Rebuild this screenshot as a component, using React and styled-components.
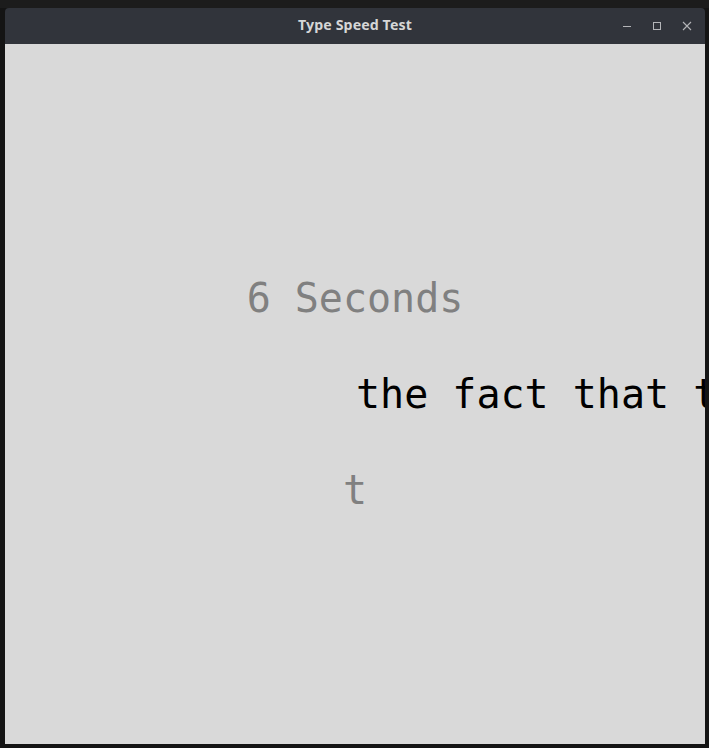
import React from "react";
import styled, { createGlobalStyle } from "styled-components";

const Global = createGlobalStyle`
  html, body { margin: 0; padding: 0; background: #141414; overflow: hidden; }
  #root { width: 709px; height: 748px; }
`;

const Desktop = styled.div`
  width: 709px;
  height: 748px;
  box-sizing: border-box;
  padding: 8px 4px 0 5px;
  background: linear-gradient(#1c1c1c 0 8px, #141414 8px);
`;

const Window = styled.div`
  width: 700px;
  display: flex;
  flex-direction: column;
`;

const TitleBar = styled.div`
  height: 36px;
  background: #31343b;
  border-radius: 4px 4px 0 0;
  display: grid;
  grid-template-columns: 1fr auto 1fr;
  align-items: center;
  padding: 0 10px;
  box-sizing: border-box;
`;

const Title = styled.div`
  grid-column: 2;
  font-family: "Noto Sans", "Open Sans", sans-serif;
  font-weight: 700;
  font-size: 14.2px;
  line-height: 20px;
  color: #d6d6d6;
  letter-spacing: 0.1px;
  padding-left: 0;
  margin-top: -2px;
`;

const Controls = styled.div`
  grid-column: 3;
  justify-self: end;
  display: flex;
  align-items: center;
  gap: 14px;
  margin-right: 0;
`;

const CtrlButton = styled.div`
  width: 16px;
  height: 16px;
  display: flex;
  align-items: center;
  justify-content: center;
  color: #b4b5b8;
`;

const Content = styled.div`
  height: 700px;
  background: #d9d9d9;
  display: flex;
  flex-direction: column;
  justify-content: center;
  overflow: hidden;
  font-family: "DejaVu Sans Mono", monospace;
  font-size: 40px;
`;

const Row = styled.div`
  height: 96px;
  line-height: 96px;
  white-space: pre;
  color: ${(p) => p.$color};
  text-align: ${(p) => (p.$fromCenter ? "left" : "center")};
  padding-left: ${(p) => (p.$fromCenter ? "351px" : "0")};
`;

export default function App() {
  return (
    <>
      <Global />
      <Desktop>
        <Window>
          <TitleBar>
            <Title>Type Speed Test</Title>
            <Controls>
              <CtrlButton>
                <svg width="10" height="10" viewBox="0 0 10 10">
                  <line x1="1" y1="5.5" x2="9" y2="5.5" stroke="currentColor" strokeWidth="1" />
                </svg>
              </CtrlButton>
              <CtrlButton>
                <svg width="10" height="10" viewBox="0 0 10 10">
                  <rect x="1.5" y="1.5" width="7" height="7" fill="none" stroke="currentColor" strokeWidth="1" />
                </svg>
              </CtrlButton>
              <CtrlButton>
                <svg width="10" height="10" viewBox="0 0 10 10">
                  <path d="M1 1 L9 9 M9 1 L1 9" stroke="currentColor" strokeWidth="1.1" />
                </svg>
              </CtrlButton>
            </Controls>
          </TitleBar>
          <Content>
            <Row $color="#808080">6 Seconds</Row>
            <Row $color="#000000" $fromCenter>the fact that the</Row>
            <Row $color="#808080">t</Row>
          </Content>
        </Window>
      </Desktop>
    </>
  );
}
